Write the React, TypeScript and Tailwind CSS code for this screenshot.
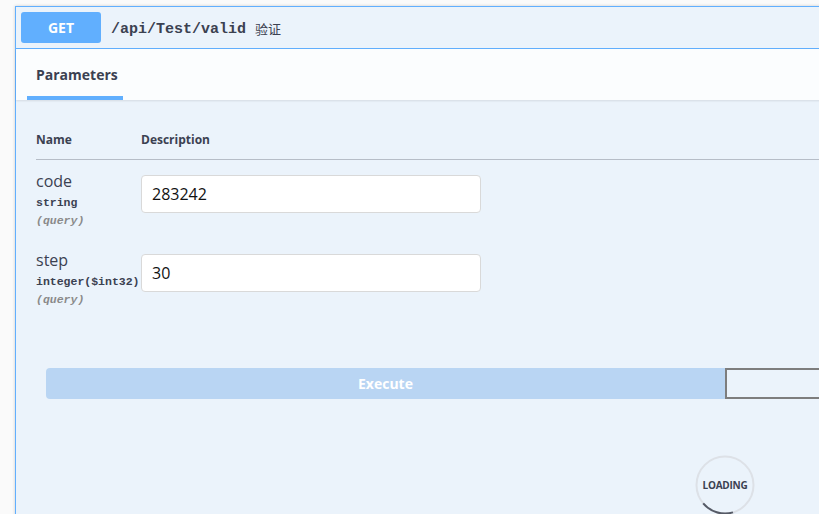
import React from 'react';

const sans = "font-['Open_Sans','Noto_Sans',sans-serif]";
const mono = "font-['Liberation_Mono','DejaVu_Sans_Mono',monospace]";

type Param = { name: string; type: string; value: string };

const params: Param[] = [
  { name: 'code', type: 'string', value: '283242' },
  { name: 'step', type: 'integer($int32)', value: '30' },
];

const ParamRow: React.FC<{ p: Param }> = ({ p }) => (
  <div className="flex pt-[11px] pb-[9px]">
    <div className="w-[105px] shrink-0">
      <div className={`${sans} text-[16px] leading-[20px] text-[#3b4151]`}>{p.name}</div>
      <div className={`${mono} mt-[5px] text-[11.5px] leading-[14px] font-bold text-[#3b4151] whitespace-nowrap`}>
        {p.type}
      </div>
      <div className={`${mono} mt-[2px] text-[11.5px] leading-[18px] italic font-bold text-[#8a8a8a]`}>(query)</div>
    </div>
    <div className="pt-[4px]">
      <div
        className={`${sans} w-[340px] h-[38px] bg-white border border-[#d9d9d9] rounded-[4px] px-[10px] flex items-center text-[16px] text-[#111]`}
      >
        {p.value}
      </div>
    </div>
  </div>
);

const App: React.FC = () => {
  return (
    <div className="w-[819px] h-[514px] overflow-hidden bg-[#fafafa]">
      <div className="ml-[15px] mt-[6px] w-[1420px] h-[520px] border border-[#61affe] bg-[#ebf3fb] shadow-[0_0_3px_rgba(0,0,0,0.19)]">
        {/* summary */}
        <div className="flex items-center h-[42px] px-[5px] border-b border-[#61affe]">
          <div className={`${sans} w-[80px] h-[31px] rounded-[3px] bg-[#61affe] text-white font-bold text-[14px] flex items-center justify-center`}>
            GET
          </div>
          <span className={`${mono} ml-[10px] mt-[6px] text-[15px] font-bold text-[#3b4151]`}>/api/Test/valid</span>
          <span className="ml-[9px] mt-[2px] text-[13px] text-[#3b4151] font-['Noto_Sans_CJK_SC',sans-serif]">验证</span>
        </div>

        {/* section header */}
        <div className="h-[51px] bg-[#fbfdfe] shadow-[0_1px_2px_rgba(0,0,0,0.1)] flex items-end pl-[11px]">
          <div className="relative h-full w-[96px] pl-[9px] flex items-center">
            <span className={`${sans} text-[14px] font-bold text-[#3b4151] whitespace-nowrap`}>Parameters</span>
            <div className="absolute left-0 right-0 bottom-0 h-[4px] bg-[#61affe]" />
          </div>
        </div>

        {/* parameters table */}
        <div className="px-[20px] pt-[32px]">
          <div className={`${sans} flex pb-[11px] border-b border-[rgba(59,65,81,0.3)] text-[12px] leading-[16px] font-bold text-[#3b4151]`}>
            <div className="w-[105px]">Name</div>
            <div>Description</div>
          </div>
          {params.map((p) => (
            <ParamRow key={p.name} p={p} />
          ))}
        </div>

        {/* execute */}
        <div className="flex px-[30px] mt-[50px]">
          <div className={`${sans} w-[679px] h-[31px] bg-[#b9d5f3] rounded-l-[4px] flex items-center justify-center text-white font-bold text-[14px]`}>
            Execute
          </div>
          <div className="w-[679px] h-[31px] border-2 border-[#7d7d7d] rounded-r-[4px]" />
        </div>

        {/* loading */}
        <div className="flex justify-center mt-[56px]">
          <div className="relative w-[60px] h-[60px] flex items-center justify-center">
            <svg className="absolute inset-0" width="60" height="60" viewBox="0 0 60 60">
              <circle cx="30" cy="30" r="28.5" fill="none" stroke="#dde1e7" strokeWidth="2" />
              <path d="M 8.2 48.3 A 28.5 28.5 0 0 0 38 57.4" fill="none" stroke="#555a66" strokeWidth="2" />
            </svg>
            <span className={`${sans} relative text-[10px] font-bold text-[#3b4151] tracking-tight`}>LOADING</span>
          </div>
        </div>
      </div>
    </div>
  );
};

export default App;
